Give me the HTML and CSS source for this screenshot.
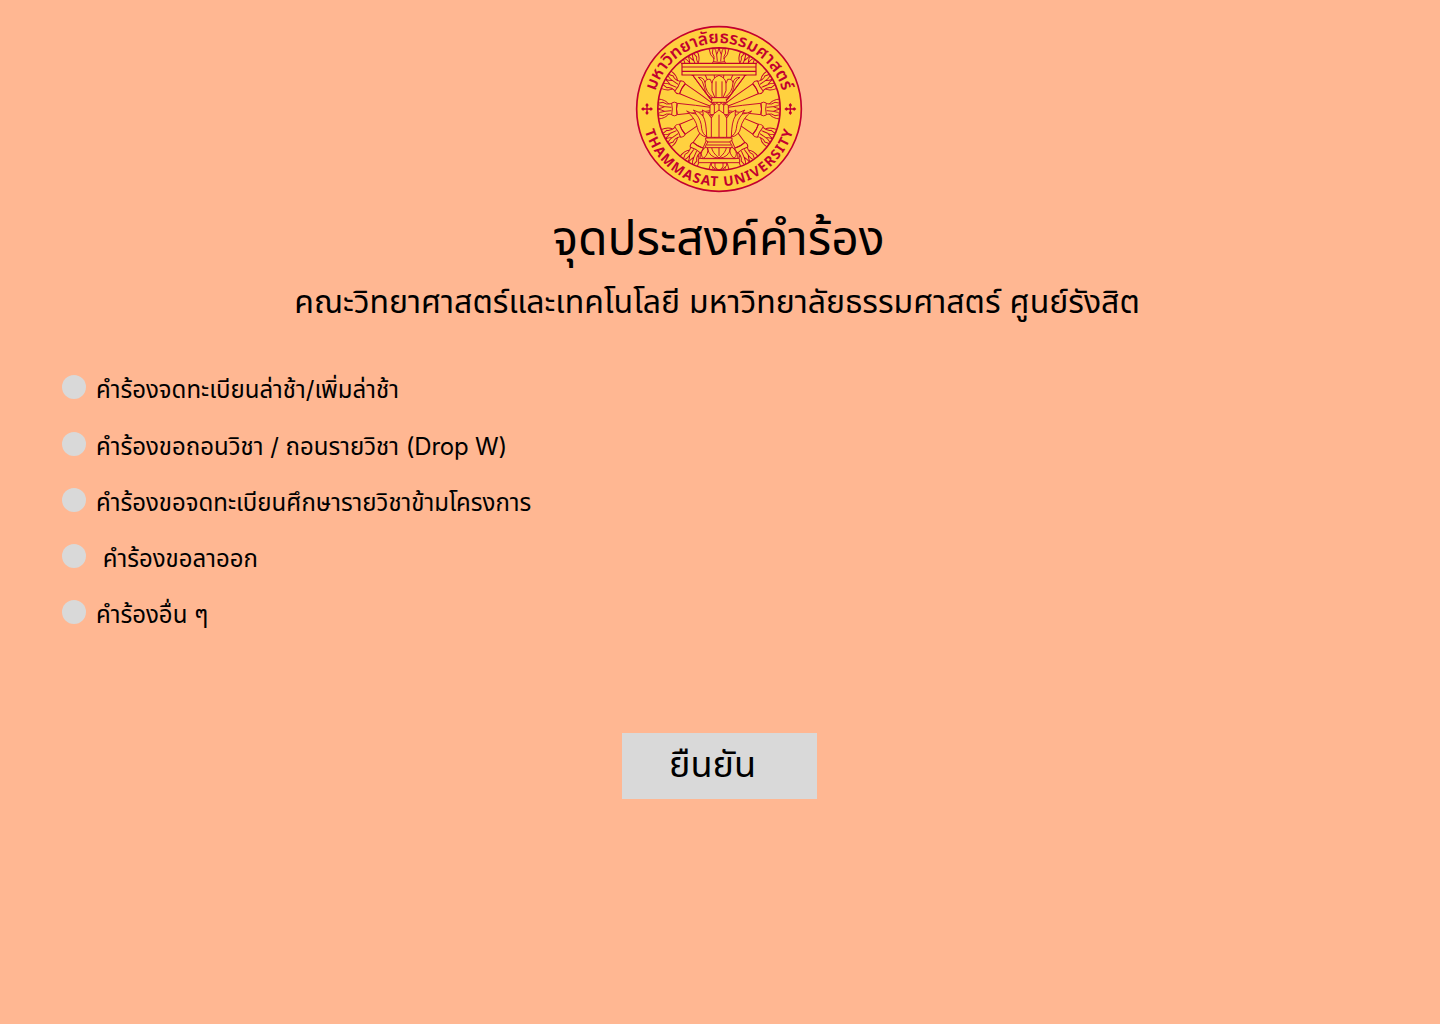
FILE: index.html
```html
<!DOCTYPE html>
<html lang="th">
<head>
<meta charset="utf-8">
<title>จุดประสงค์คำร้อง</title>
<link rel="stylesheet" href="styles.css">
</head>
<body>
<main class="page">
  <svg class="seal" viewBox="0 0 540 540" role="img" aria-label="Thammasat University">
    <defs>
      <path id="arc-top" d="M69 267a198 198 0 0 1 396 0"/>
      <path id="arc-bottom" d="M35 267a232 232 0 0 0 464 0"/>
      <clipPath id="wheel"><circle cx="267" cy="267" r="183"/></clipPath>
      <g id="spoke">
        <path d="M-18-4L-70-11-125-17Q-130 0-125 17L-70 11-18 4"/>
        <path d="M-142-18Q-134-23-126-18Q-129 0-126 18Q-134 23-142 18Q-138 0-142-18Z"/>
        <path d="M-142-16Q-160-12-168-20L-186-17Q-178-8-163-7L-143-5M-163-7Q-173-2-186 0Q-173 2-163 7L-143 5M-163 7Q-178 8-186 17L-168 20Q-160 12-142 16M-150-14Q-160-28-182-30M-150 14Q-160 28-182 30"/>
      </g>
      <g id="cross"><path d="M0-18L5-12 2-7V-2H7L12-5 18 0 12 5 7 2H2V7L5 12 0 18-5 12-2 7V2H-7L-12 5-18 0-12-5-7-2H-2V-7L-5-12Z"/></g>
    </defs>
    <circle class="disc" cx="267" cy="267" r="246"/>
    <g class="line" clip-path="url(#wheel)">
      <g transform="translate(267 267)">
        <use href="#spoke"/>
        <use href="#spoke" transform="rotate(29)"/>
        <use href="#spoke" transform="rotate(60)"/>
        <use href="#spoke" transform="rotate(90)"/>
        <use href="#spoke" transform="rotate(120)"/>
        <use href="#spoke" transform="rotate(151)"/>
        <use href="#spoke" transform="rotate(180)"/>
        <use href="#spoke" transform="rotate(209)"/>
        <use href="#spoke" transform="rotate(240)"/>
        <use href="#spoke" transform="rotate(270)"/>
        <use href="#spoke" transform="rotate(300)"/>
        <use href="#spoke" transform="rotate(331)"/>
      </g>
      <!-- upper bowl -->
      <path class="solid" d="M205 172Q222 172 225 188Q227 176 241 178Q244 186 246 190Q247 174 267 166Q287 174 288 190Q290 186 293 178Q307 176 309 188Q312 172 330 172Q314 182 311 202Q307 225 290 233H244Q227 225 223 202Q220 182 205 172Z"/>
      <path d="M225 188Q227 218 248 231M246 190V212L254 231M258 184V231M276 184V231M288 190V212L280 231M309 188Q307 218 286 231M190 169L241 238M344 169L293 238"/>
      <!-- waist -->
      <path class="solid" d="M244 233H292V239H288L292 247H243L247 239H244Z"/>
      <path class="solid" d="M240 284V256Q246 247 253 256Q260 245 267 256Q274 245 281 256Q288 247 295 256V284Z"/>
      <path d="M253 256V284M267 256V284M281 256V284"/>
      <!-- lower bowl -->
      <path class="solid" d="M170 273Q182 281 198 282Q197 276 190 270Q208 275 219 288Q221 278 217 270Q236 276 244 294Q248 280 267 270Q286 280 290 294Q298 276 318 270Q314 278 316 288Q327 275 345 270Q338 276 337 282Q353 281 365 273Q337 297 332 323Q329 346 302 352H231Q205 346 202 323Q198 297 170 273Z"/>
      <path d="M198 282Q214 300 215 326Q217 342 232 351M219 288Q229 304 230 351M244 294V351M267 284V351M290 294V351M337 282Q321 300 319 326Q317 342 302 351M316 288Q305 304 304 351"/>
      <!-- foot -->
      <path class="solid" d="M229 380H303Q325 390 324 415H210Q209 390 229 380Z"/>
      <path d="M222 385Q206 403 221 415Q237 400 233 384M232 384Q237 412 267 415Q297 412 302 384M311 385Q327 403 312 415Q296 400 300 384M245 382Q246 397 267 414Q288 397 289 382M267 382V408"/>
      <path class="solid" d="M227 354H306V361L299 365L306 377V383H227V377L234 365L227 361Z"/>
      <path d="M234 366H299M229 375H304"/>
      <path class="solid" d="M205 417Q209 414 220 416H315Q326 414 329 417V428H205Z"/>
      <path class="solid" d="M244 429H290V437Q280 449 267 450Q254 449 244 437Z"/>
      <path d="M255 429V441L263 448M279 429V441L271 448"/>
      <!-- tray -->
      <path class="solid tray" d="M156 130H378V165H156Z"/>
      <path class="tray" d="M156 141H378M156 154H378"/>
    </g>
    <circle class="ring" cx="267" cy="267" r="247"/>
    <circle class="ring" cx="267" cy="267" r="183.500"/>
    <g class="ink">
      <use href="#cross" x="51" y="267"/>
      <use href="#cross" x="481" y="267"/>
      <text class="seal-thai" text-anchor="middle"><textPath href="#arc-top" startOffset="50%">มหาวิทยาลัยธรรมศาสตร์</textPath></text>
      <text class="seal-latin"><textPath href="#arc-bottom" startOffset="9.200%" textLength="594">THAMMASAT UNIVERSITY</textPath></text>
    </g>
  </svg>
  <h1 class="title">จุดประสงค์คำร้อง</h1>
  <h2 class="faculty">คณะวิทยาศาสตร์และเทคโนโลยี มหาวิทยาลัยธรรมศาสตร์ ศูนย์รังสิต</h2>
  <ul class="options">
    <li class="option"><span class="dot"></span><span class="label">คำร้องจดทะเบียนล่าช้า/เพิ่มล่าช้า</span></li>
    <li class="option"><span class="dot"></span><span class="label">คำร้องขอถอนวิชา / ถอนรายวิชา <span class="latin">(Drop W)</span></span></li>
    <li class="option"><span class="dot"></span><span class="label">คำร้องขอจดทะเบียนศึกษารายวิชาข้ามโครงการ</span></li>
    <li class="option"><span class="dot"></span><span class="label"> คำร้องขอลาออก</span></li>
    <li class="option"><span class="dot"></span><span class="label">คำร้องอื่น ๆ</span></li>
  </ul>
  <button class="confirm" type="button">ยืนยัน</button>
</main>
</body>
</html>
```
FILE: styles.css
```css
* { box-sizing: border-box; }
body {
  margin: 0;
  background: #ffb792;
  color: #000;
  font-family: Inter, "Noto Sans Thai", "Noto Sans", sans-serif;
}
.page {
  display: flex;
  flex-direction: column;
  align-items: center;
  height: 1024px;
  padding-top: 20px;
  overflow: hidden;
}
.seal { flex: none; width: 180px; height: 180px; }
.disc { fill: #ffd13f; }
.line { fill: none; stroke: #c3002f; stroke-width: 2.8; stroke-linejoin: round; }
.solid { fill: #ffd13f; }
.tray { stroke-width: 3.5; }
.ring { fill: none; stroke: #c3002f; stroke-width: 5; }
.ink { fill: #c3002f; }
.seal-thai { font-size: 51px; font-weight: 600; }
.seal-latin { font: 700 41px "Noto Sans", sans-serif; }
.title, .faculty {
  margin: 0;
  font-weight: 400;
  white-space: nowrap;
}
.title { margin-top: 9px; padding-right: 3px; font-size: 48px; line-height: 58px; }
.faculty { margin-top: 15px; padding-right: 6px; font-size: 32px; line-height: 39px; }
.options {
  display: flex;
  flex-direction: column;
  align-self: stretch;
  gap: 27px;
  margin: 53px 0 0;
  padding: 0 0 0 62px;
  list-style: none;
}
.option { display: flex; gap: 10px; height: 29px; }
.option:first-child { margin: -1px 0 1px; }
.dot { width: 24px; height: 24px; margin-top: 2px; border-radius: 50%; background: #d9d9d9; }
.label { padding-top: 2px; font-size: 24px; line-height: 29px; white-space: pre; }
.latin { letter-spacing: -0.2px; }
.confirm {
  width: 195px;
  height: 66px;
  margin: 106px 2px 0 0;
  padding: 0 13px 4px 0;
  border: 0;
  background: #d9d9d9;
  color: #000;
  font: 400 36px/44px Inter, "Noto Sans Thai", "Noto Sans", sans-serif;
}
```
